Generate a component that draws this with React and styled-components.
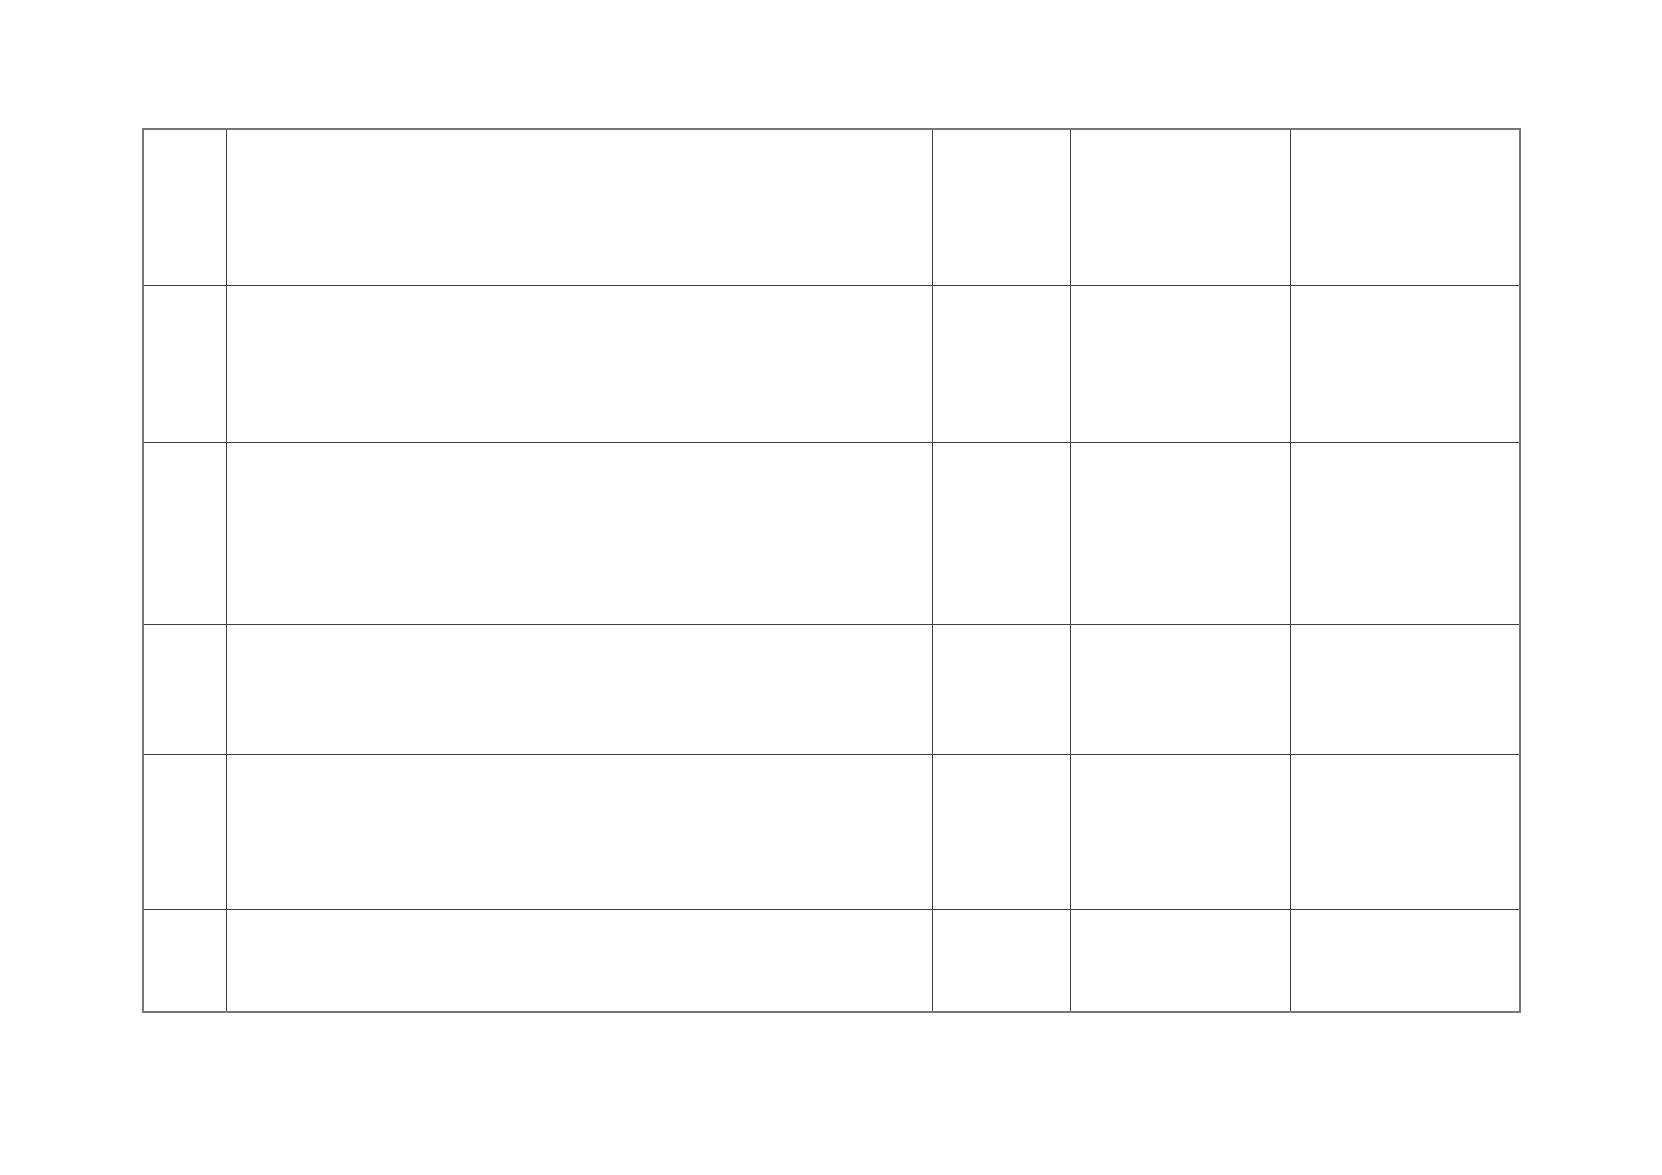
import React from 'react';
import styled, { createGlobalStyle } from 'styled-components';

const GlobalStyle = createGlobalStyle`
  html, body {
    margin: 0;
    padding: 0;
    background: #fff;
    font-family: "Liberation Sans", Arial, sans-serif;
  }
`;

const Page = styled.div`
  width: 1662px;
  height: 1175px;
  padding: 128px 0 0 142px;
  box-sizing: border-box;
  background: #fff;
`;

// gap + dark background draws the inner rules, the border draws the frame
const Grid = styled.div`
  display: grid;
  grid-template-columns: 82px 705px 137px 219px 228px;
  grid-template-rows: 155px 156px 181px 129px 154px 101px;
  gap: 1px;
  width: max-content;
  background: #404040;
  border: 2px solid #767676;
`;

const Cell = styled.div`
  background: #fff;
`;

const ROWS = 6;
const COLS = 5;

export default function App() {
  return (
    <>
      <GlobalStyle />
      <Page>
        <Grid>
          {Array.from({ length: ROWS * COLS }).map((_, i) => (
            <Cell key={i} />
          ))}
        </Grid>
      </Page>
    </>
  );
}
